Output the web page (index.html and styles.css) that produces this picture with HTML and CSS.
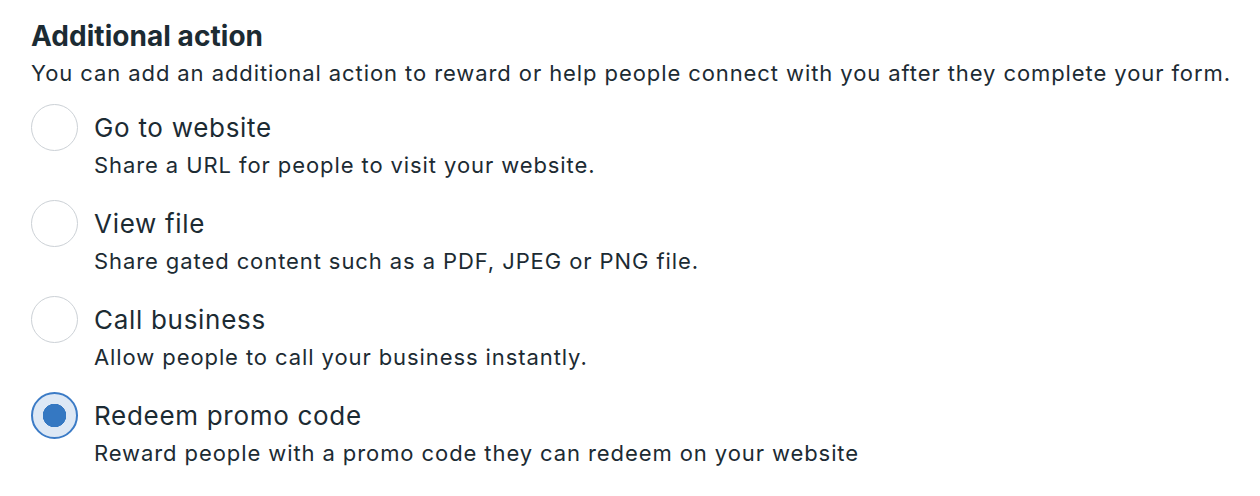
FILE: index.html
```html
<!DOCTYPE html>
<html>
<head>
<meta charset="utf-8">
<link rel="stylesheet" href="styles.css">
</head>
<body>
<section class="panel">
  <h2 class="title">Additional action</h2>
  <p class="desc">You can add an additional action to reward or help people connect with you after they complete your form.</p>
  <div class="options">
    <div class="option">
      <span class="radio"></span>
      <div class="text">
        <div class="label">Go to website</div>
        <div class="sub">Share a URL for people to visit your website.</div>
      </div>
    </div>
    <div class="option">
      <span class="radio"></span>
      <div class="text">
        <div class="label">View file</div>
        <div class="sub">Share gated content such as a PDF, JPEG or PNG file.</div>
      </div>
    </div>
    <div class="option">
      <span class="radio"></span>
      <div class="text">
        <div class="label">Call business</div>
        <div class="sub">Allow people to call your business instantly.</div>
      </div>
    </div>
    <div class="option">
      <span class="radio checked"></span>
      <div class="text">
        <div class="label">Redeem promo code</div>
        <div class="sub">Reward people with a promo code they can redeem on your website</div>
      </div>
    </div>
  </div>
</section>
</body>
</html>
```
FILE: styles.css
```css
html, body {
  margin: 0;
  background: #ffffff;
}
body {
  font-family: Inter, "Noto Sans", sans-serif;
  color: #1c2b33;
}
.panel {
  padding: 19px 31px 0 31px;
}
.title {
  margin: 0;
  font-size: 28px;
  font-weight: 700;
  line-height: 34px;
  letter-spacing: 0.05px;
}
.desc {
  margin: 5px 0 0 0;
  font-size: 22px;
  line-height: 30px;
  letter-spacing: 0.91px;
  white-space: nowrap;
}
.options {
  display: flex;
  flex-direction: column;
  gap: 27px;
  margin-top: 23px;
}
.option {
  display: flex;
  align-items: flex-start;
  gap: 16px;
}
.radio {
  box-sizing: border-box;
  width: 47px;
  height: 47px;
  border-radius: 50%;
  border: 1.5px solid #ccd1d6;
  flex: none;
  margin-top: -7px;
}
.radio.checked {
  border: 2px solid #3b7bc6;
  background: radial-gradient(circle, #3578c2 0 11.5px, #dde8f5 12px);
}
.label {
  font-size: 26px;
  line-height: 34px;
  letter-spacing: 0.7px;
}
.sub {
  margin-top: 5px;
  font-size: 22px;
  line-height: 30px;
  letter-spacing: 0.91px;
}
```
